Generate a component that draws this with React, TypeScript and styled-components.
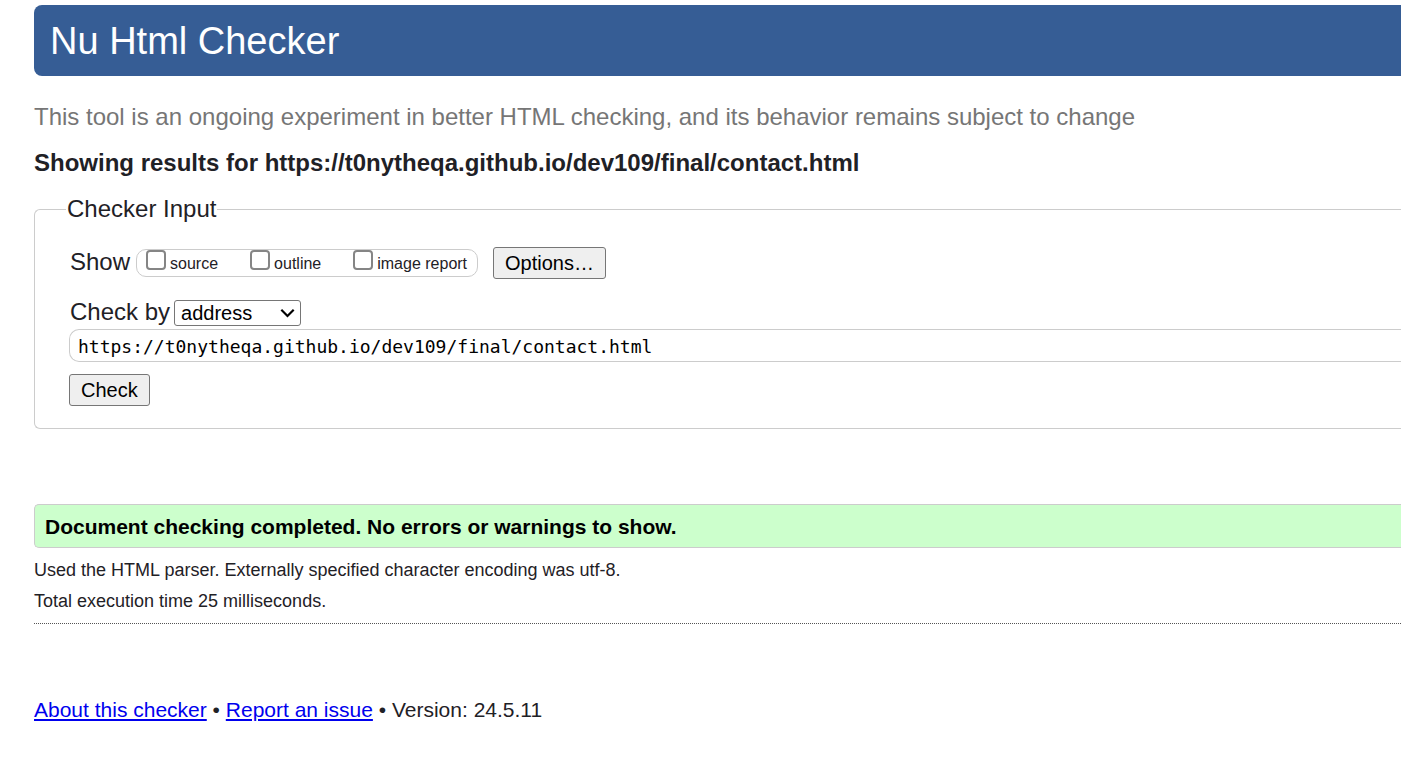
import React, { useState } from "react";
import styled, { createGlobalStyle } from "styled-components";

const GlobalStyle = createGlobalStyle`
  *, *::before, *::after { box-sizing: border-box; }
  body {
    margin: 0;
    background: #fff;
    color: #1f2126;
    font-family: "Liberation Sans", Arial, sans-serif;
  }
`;

const Page = styled.div`
  display: flex;
  flex-direction: column;
  padding: 5px 0 36px 34px;
`;

const Banner = styled.h1`
  margin: 0;
  padding: 14px 16px 13px;
  border-radius: 8px 0 0 8px;
  background: #365d95;
  color: #fff;
  font-size: 38px;
  font-weight: 400;
  line-height: 44px;
`;

const Intro = styled.p`
  margin: 27px 0 0;
  color: #767676;
  font-size: 24px;
  line-height: 28px;
`;

const Heading = styled.h2`
  margin: 18px 0;
  font-size: 24px;
  font-weight: 700;
  line-height: 28px;
`;

const CheckerForm = styled.form`
  display: block;
`;

const Fieldset = styled.fieldset`
  min-width: 0;
  margin: 0;
  padding: 24px 0 22px 34px;
  border: 1px solid #ccc;
  border-right: none;
  border-radius: 6px 0 0 6px;
`;

const Legend = styled.legend`
  margin-left: -3px;
  padding: 0 1px;
  font-size: 24px;
  line-height: 28px;
`;

const Row = styled.div`
  display: flex;
  align-items: center;
`;

const RowLabel = styled.span`
  padding: 0 0 2px 1px;
  font-size: 24px;
  line-height: 26px;
`;

const ShowGroup = styled.div`
  display: flex;
  gap: 32px;
  height: 28px;
  margin: 0 15px 0 6px;
  padding: 0 10px 0 9px;
  border: 1px solid #ccc;
  border-radius: 10px;
`;

const CheckLabel = styled.label`
  display: flex;
  align-items: flex-start;
  gap: 4px;
  font-size: 16px;
  line-height: 28px;
`;

const CheckBox = styled.input`
  appearance: none;
  width: 20px;
  height: 20px;
  margin: 0;
  border: 2px solid #858585;
  border-radius: 4px;
  background: #fff;

  &:checked {
    background: #0075ff;
    border-color: #0075ff;
  }
`;

const Button = styled.button`
  display: block;
  height: 32px;
  padding: 0 11px;
  border: 1px solid #767676;
  border-radius: 3px;
  background: #efefef;
  color: #000;
  font: 20px/28px "Liberation Sans", Arial, sans-serif;
`;

const MethodRow = styled(Row)`
  gap: 4px;
  margin-top: 20px;
`;

const SelectWrap = styled.div`
  display: grid;
  align-items: center;
  width: 127px;
`;

const MethodSelect = styled.select`
  grid-area: 1 / 1;
  appearance: none;
  width: 100%;
  height: 26px;
  padding: 0 6px;
  border: 1px solid #767676;
  border-radius: 3px;
  background: #fff;
  color: #000;
  font: 20px/24px "Liberation Sans", Arial, sans-serif;
`;

const Chevron = styled.svg`
  grid-area: 1 / 1;
  justify-self: end;
  margin-right: 6px;
  pointer-events: none;
`;

const AddressInput = styled.input`
  display: block;
  width: 100%;
  height: 33px;
  margin: 2px 0 12px;
  padding: 2px 8px 0;
  border: 1px solid #ccc;
  border-right: none;
  border-radius: 10px 0 0 10px;
  background: #fff;
  color: #000;
  font: 18px/28px "DejaVu Sans Mono", monospace;
`;

const Success = styled.p`
  margin: 75px 0 12px;
  padding: 9px 10px 7px;
  border: 1px solid #ccc;
  border-right: none;
  border-radius: 5px 0 0 5px;
  background: #cfc;
  color: #000;
  font-size: 21px;
  font-weight: 700;
  line-height: 26px;
`;

const Details = styled.div`
  display: flex;
  flex-direction: column;
  gap: 11px;
  padding-bottom: 12px;
  border-bottom: 1px dotted #555;
  font-size: 18px;
  line-height: 20px;
`;

const Detail = styled.p`
  margin: 0;
`;

const Footer = styled.footer`
  margin-top: 74px;
  font-size: 21px;
  line-height: 24px;
`;

const FooterLink = styled.a`
  color: #00e;
  text-decoration: underline;
`;

const showOptions = ["source", "outline", "image report"];

export default function App() {
  const [address, setAddress] = useState(
    "https://t0nytheqa.github.io/dev109/final/contact.html"
  );

  return (
    <>
      <GlobalStyle />
      <Page>
        <Banner>Nu Html Checker</Banner>
        <Intro>
          This tool is an ongoing experiment in better HTML checking, and its
          behavior remains subject to change
        </Intro>
        <Heading>
          Showing results for https://t0nytheqa.github.io/dev109/final/contact.html
        </Heading>
        <CheckerForm onSubmit={(event) => event.preventDefault()}>
          <Fieldset>
            <Legend>Checker Input</Legend>
            <Row>
              <RowLabel id="show-label">Show</RowLabel>
              <ShowGroup role="group" aria-labelledby="show-label">
                {showOptions.map((name) => (
                  <CheckLabel key={name}>
                    <CheckBox type="checkbox" name={name} />
                    {name}
                  </CheckLabel>
                ))}
              </ShowGroup>
              <Button type="button">Options…</Button>
            </Row>
            <MethodRow>
              <RowLabel as="label" htmlFor="method">
                Check by
              </RowLabel>
              <SelectWrap>
                <MethodSelect id="method" defaultValue="address">
                  <option value="address">address</option>
                  <option value="upload">file upload</option>
                  <option value="text">text input</option>
                </MethodSelect>
                <Chevron width="15" height="10" viewBox="0 0 15 10" aria-hidden="true">
                  <path
                    d="M1.3 1.8 7.5 8 13.7 1.8"
                    fill="none"
                    stroke="#000"
                    strokeWidth="2.2"
                  />
                </Chevron>
              </SelectWrap>
            </MethodRow>
            <AddressInput
              type="text"
              aria-label="Address"
              spellCheck={false}
              value={address}
              onChange={(event) => setAddress(event.target.value)}
            />
            <Button type="submit">Check</Button>
          </Fieldset>
        </CheckerForm>
        <Success>Document checking completed. No errors or warnings to show.</Success>
        <Details>
          <Detail>
            Used the HTML parser. Externally specified character encoding was utf-8.
          </Detail>
          <Detail>Total execution time 25 milliseconds.</Detail>
        </Details>
        <Footer>
          <FooterLink href="#about">About this checker</FooterLink> •{" "}
          <FooterLink href="#issues">Report an issue</FooterLink> • Version: 24.5.11
        </Footer>
      </Page>
    </>
  );
}
